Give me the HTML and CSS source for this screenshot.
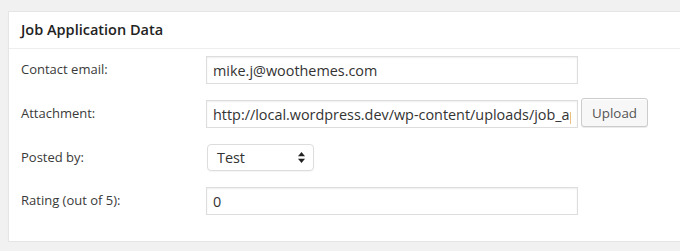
FILE: index.html
```html
<!DOCTYPE html>
<html lang="en">
<head>
    <meta charset="UTF-8">
    <title>Job Application Data</title>
    <link rel="stylesheet" href="styles.css">
</head>
<body>
    <div class="postbox">
        <h2 class="hndle">Job Application Data</h2>

        <div class="inside">
            <div class="field">
                <label for="contactEmail">Contact email:</label>
                <input type="text" id="contactEmail" value="mike.j@woothemes.com">
            </div>

            <div class="field">
                <label for="attachment">Attachment:</label>
                <input type="text" id="attachment" value="http://local.wordpress.dev/wp-content/uploads/job_applications/resume.pdf">
                <button class="button">Upload</button>
            </div>

            <div class="field">
                <label>Posted by:</label>
                <span class="select">
                    <span class="select-value">Test</span>
                    <svg class="select-arrows" width="7" height="11" viewBox="0 0 7 11">
                        <path d="M3.5 0 L7 4.2 L0 4.2 Z" fill="#222"/>
                        <path d="M3.5 11 L7 6.8 L0 6.8 Z" fill="#222"/>
                    </svg>
                </span>
            </div>

            <div class="field">
                <label for="rating">Rating (out of 5):</label>
                <input type="text" id="rating" value="0">
            </div>
        </div>
    </div>
</body>
</html>
```

FILE: styles.css
```css
body {
    margin: 0;
    padding: 11px 0 0 8px;
    background-color: #f1f1f1;
    font-family: 'Open Sans', sans-serif;
    color: #444;
    overflow: hidden;
}

.postbox {
    width: 720px;
    background-color: #fff;
    border: 1px solid #e5e5e5;
    box-shadow: 0 1px 1px rgba(0, 0, 0, 0.04);
}

.hndle {
    margin: 0;
    padding: 0 12px;
    height: 36px;
    line-height: 36px;
    font-size: 14.5px;
    font-weight: 600;
    color: #222;
    border-bottom: 1px solid #eee;
}

.inside {
    padding: 7px 12px 26px;
    display: flex;
    flex-direction: column;
    gap: 16px;
}

.field {
    display: flex;
    align-items: flex-start;
}

.field label {
    width: 185px;
    flex-shrink: 0;
    padding-top: 4px;
    font-size: 13px;
    line-height: 18px;
    color: #3a3a3a;
}

.field input {
    box-sizing: border-box;
    width: 372px;
    height: 28px;
    margin: 0;
    padding: 0 6px;
    border: 1px solid #ddd;
    box-shadow: inset 0 1px 2px rgba(0, 0, 0, 0.07);
    font-family: 'Open Sans', sans-serif;
    font-size: 14.4px;
    color: #333;
    background: #fff;
    outline: none;
}

.button {
    box-sizing: border-box;
    height: 29px;
    margin: -2px 0 0 3px;
    padding: 0 10px;
    border: 1px solid #ccc;
    border-radius: 3px;
    background: #f7f7f7;
    box-shadow: inset 0 1px 0 #fff, 0 1px 0 rgba(0, 0, 0, 0.08);
    font-family: 'Open Sans', sans-serif;
    font-size: 13.4px;
    color: #555;
}

.select {
    box-sizing: border-box;
    width: 107px;
    height: 27px;
    margin-left: 1px;
    padding: 0 8px 0 9px;
    display: flex;
    align-items: center;
    justify-content: space-between;
    border: 1px solid #ddd;
    border-radius: 4px;
    background: #fff;
    box-shadow: 0 1px 1px rgba(0, 0, 0, 0.04);
}

.select-value {
    font-size: 14.4px;
    color: #333;
}

.select-arrows {
    display: block;
}
```
